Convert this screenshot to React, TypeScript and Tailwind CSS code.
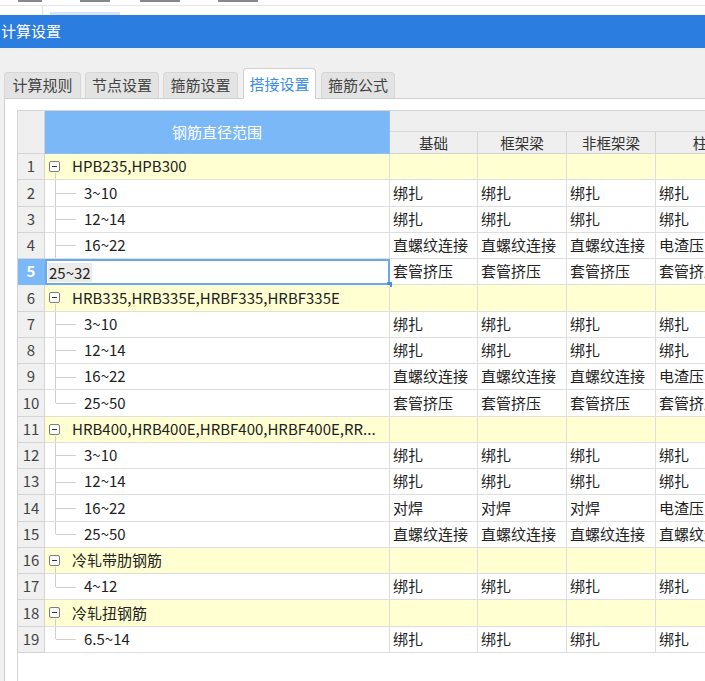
import React from 'react';

type Row = {
  label: string;
  group?: boolean;
  last?: boolean;
  cells?: string[];
};

const B = '绑扎';
const Z = '直螺纹连接';
const T = '套管挤压';
const D = '电渣压力焊';

const rows: Row[] = [
  { label: 'HPB235,HPB300', group: true },
  { label: '3~10', cells: [B, B, B, B] },
  { label: '12~14', cells: [B, B, B, B] },
  { label: '16~22', cells: [Z, Z, Z, D] },
  { label: '25~32', last: true, cells: [T, T, T, T] },
  { label: 'HRB335,HRB335E,HRBF335,HRBF335E', group: true },
  { label: '3~10', cells: [B, B, B, B] },
  { label: '12~14', cells: [B, B, B, B] },
  { label: '16~22', cells: [Z, Z, Z, D] },
  { label: '25~50', last: true, cells: [T, T, T, T] },
  { label: 'HRB400,HRB400E,HRBF400,HRBF400E,RR...', group: true },
  { label: '3~10', cells: [B, B, B, B] },
  { label: '12~14', cells: [B, B, B, B] },
  { label: '16~22', cells: ['对焊', '对焊', '对焊', D] },
  { label: '25~50', last: true, cells: [Z, Z, Z, Z] },
  { label: '冷轧带肋钢筋', group: true },
  { label: '4~12', last: true, cells: [B, B, B, B] },
  { label: '冷轧扭钢筋', group: true },
  { label: '6.5~14', last: true, cells: [B, B, B, B] },
];

const tabs = ['计算规则', '节点设置', '箍筋设置', '搭接设置', '箍筋公式'];
const tabWidths = ['w-[77px]', 'w-[74px]', 'w-[75px]', 'w-[73px]', 'w-[74px]'];
const cols = ['基础', '框架梁', '非框架梁', '柱'];
const SELECTED = 4;

function TreeCell({ row, index }: { row: Row; index: number }) {
  if (index === SELECTED) {
    return (
      <div className="relative h-full border-2 border-[#6aa8ec] bg-white flex items-center pl-[1px]">
        <span className="bg-[#ebebeb] px-[1px] leading-[19px]">{row.label}</span>
        <div className="absolute -right-[4px] -bottom-[4px] w-[5px] h-[5px] bg-[#4a90e2]" />
      </div>
    );
  }
  if (row.group) {
    return (
      <div className="relative h-full flex items-center border-b border-r border-[#dedede] bg-[#ffffd2]">
        <div className="ml-[4px] w-[11px] h-[11px] border border-[#7d7d7d] rounded-[2px] bg-white flex items-center justify-center">
          <div className="w-[5px] h-px bg-[#333]" />
        </div>
        <span className="ml-[12px] whitespace-nowrap">{row.label}</span>
        <div className="absolute left-[10px] top-[19px] bottom-0 w-px bg-[#cfcfcf]" />
      </div>
    );
  }
  return (
    <div className="relative h-full flex items-center border-b border-r border-[#dedede] bg-white">
      <div className={`absolute left-[10px] top-0 w-px bg-[#cfcfcf] ${row.last ? 'h-1/2' : 'h-full'}`} />
      <div className="absolute left-[11px] top-1/2 w-[20px] h-px bg-[#cfcfcf]" />
      <span className="ml-[39px] whitespace-nowrap">{row.label}</span>
    </div>
  );
}

export default function App() {
  return (
    <div className="w-[705px] h-[681px] overflow-hidden bg-white flex flex-col text-[15px] text-[#222] font-['Noto_Sans_CJK_SC','Noto_Sans',sans-serif]">
      {/* top strip of the window behind */}
      <div className="relative h-[15px] shrink-0 bg-white">
        <div className="absolute left-0 right-0 top-[5px] h-px bg-[#e6e6e6]" />
        <div className="absolute left-[18px] top-0 w-[24px] h-[2px] bg-[#888]" />
        <div className="absolute left-[80px] top-0 w-[30px] h-[2px] bg-[#888]" />
        <div className="absolute left-[140px] top-0 w-[40px] h-[2px] bg-[#888]" />
        <div className="absolute left-[218px] top-0 w-[40px] h-[2px] bg-[#888]" />
        <div className="absolute left-[42px] top-[5px] w-px h-[10px] bg-[#e0e0e0]" />
        <div className="absolute left-[50px] top-[12px] w-[70px] h-[3px] bg-[#d6e3f5]" />
      </div>

      {/* title bar */}
      <div className="h-[33px] shrink-0 bg-[#2b7de0] text-white flex items-center pl-px text-[15px]">计算设置</div>

      {/* dialog body */}
      <div className="flex-1 bg-[#f0f0f0] flex flex-col pl-[4px]">
        <div className="flex items-end gap-[4px] pt-[20px] h-[50px] shrink-0">
          {tabs.map((t, i) =>
            i === 3 ? (
              <div
                key={t}
                className={`${tabWidths[i]} h-[31px] -mb-px relative z-10 bg-white border border-b-0 border-[#d0d0d0] rounded-t-[4px] flex items-center justify-center text-[#3a8ee6] ml-px mr-px`}
              >
                {t}
              </div>
            ) : (
              <div
                key={t}
                className={`${tabWidths[i]} h-[26px] bg-[#e3e3e3] border border-b-0 border-[#d6d6d6] rounded-t-[4px] flex items-center justify-center text-[#444]`}
              >
                {t}
              </div>
            )
          )}
        </div>

        <div className="flex-1 bg-white border-l border-t border-[#d0d0d0] pl-[12px] pt-[11px] overflow-hidden">
          <div className="h-full border-l border-t border-[#d4d4d4] overflow-hidden">
            <div className="grid grid-cols-[27px_345px_88px_89px_89px_89px] grid-rows-[21px_22px] auto-rows-[26.26px] w-[727px]">
              {/* header */}
              <div className="row-span-2 bg-[#efefef] border-r border-b border-[#d4d4d4]" />
              <div className="row-span-2 bg-[#7ab8f7] text-white flex items-center justify-center border-b border-r border-[#8cbff0]">
                钢筋直径范围
              </div>
              <div className="col-span-4 bg-[#efefef] border-b border-[#d8d8d8]" />
              {cols.map((c) => (
                <div
                  key={c}
                  className="bg-[#efefef] border-r border-b border-[#d4d4d4] flex items-center justify-center text-[#333] text-[14.5px]"
                >
                  {c}
                </div>
              ))}

              {/* body */}
              {rows.map((row, i) => (
                <React.Fragment key={i}>
                  <div
                    className={`flex items-center justify-center border-r border-b ${
                      i === SELECTED
                        ? 'bg-[#7ab8f7] text-white font-bold border-[#7ab8f7]'
                        : 'bg-[#f0f0f0] text-[#444] border-[#d4d4d4]'
                    }`}
                  >
                    {i + 1}
                  </div>
                  <TreeCell row={row} index={i} />
                  {[0, 1, 2, 3].map((c) => (
                    <div
                      key={c}
                      className={`flex items-center pl-[3px] whitespace-nowrap overflow-hidden border-r border-b border-[#dedede] ${
                        row.group ? 'bg-[#ffffd2]' : 'bg-white'
                      }`}
                    >
                      {row.cells ? row.cells[c] : ''}
                    </div>
                  ))}
                </React.Fragment>
              ))}
            </div>
          </div>
        </div>
      </div>
    </div>
  );
}
